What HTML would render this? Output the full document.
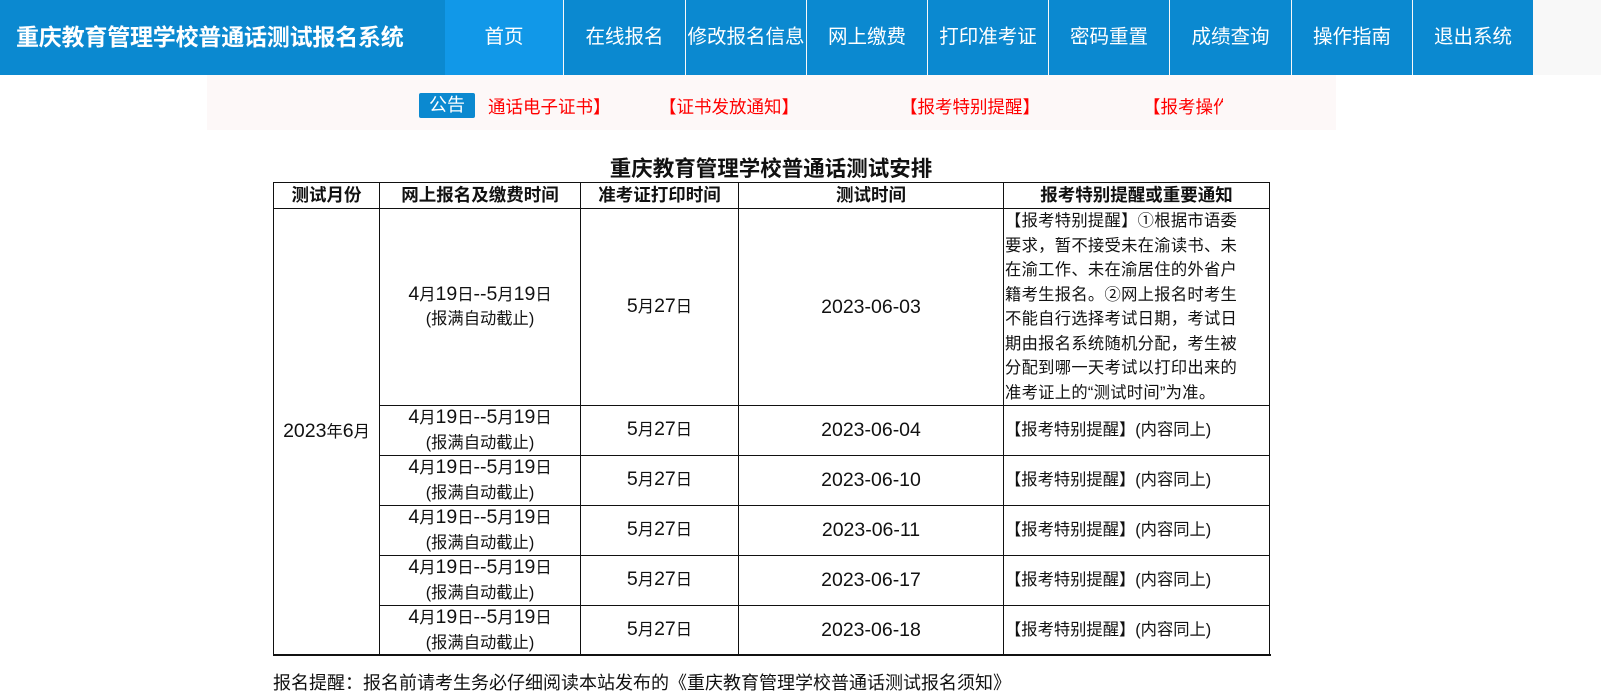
<!DOCTYPE html>
<html><head><meta charset="utf-8"><style>
*{margin:0;padding:0;box-sizing:border-box}
body{width:1601px;height:676px;overflow:hidden;background:#fff;font-family:"Liberation Sans","Noto Sans CJK SC",sans-serif;position:relative}
.hdr{position:absolute;left:0;top:0;width:1601px;height:75px;background:#f8f8f8}
.title{position:absolute;left:0;top:0;width:445px;height:75px;background:#0b89d0;color:#fff;font-weight:bold;font-size:23px;line-height:75px;padding-left:16px;letter-spacing:-0.2px;white-space:nowrap}
.nav{position:absolute;top:0;height:75px;background:#0b89d0;color:#fff;font-size:19.5px;line-height:75px;text-align:center;white-space:nowrap;overflow:hidden}
.notice{position:absolute;left:207px;top:75px;width:1129px;height:55px;background:#fdf8f8}
.badge{position:absolute;left:419px;top:93px;width:56px;height:25px;background:#0b89d0;color:#fff;border-radius:2px;font-size:18px;line-height:25px;text-align:center}
.red{position:absolute;top:95px;color:#f00;font-size:17.5px;line-height:24px;white-space:nowrap}
h2{position:absolute;left:273px;width:996px;top:155px;text-align:center;font-size:21.5px;line-height:28px;color:#111;white-space:nowrap}
table{position:absolute;left:273px;top:182px;border-collapse:collapse;font-size:16.3px;color:#111;table-layout:fixed}
td,th{border:1px solid #111;text-align:center;line-height:24.5px;padding:0;white-space:nowrap;overflow:hidden}
th{height:26px;font-size:17.5px}
td{height:50px}
.n{text-align:left;padding-left:1px}
.d{font-size:19.5px;line-height:0}
.foot{position:absolute;left:273px;top:654px;width:998px;border-top:2px solid #111;font-size:18px;color:#111;line-height:24px;padding-top:15px;white-space:nowrap;overflow:hidden;background:#fff}
</style></head><body>
<div class="hdr"></div>
<div class="title">重庆教育管理学校普通话测试报名系统</div>
<div class="nav" style="left:445px;width:118px;background:#1198e8">首页</div>
<div class="nav" style="left:564px;width:121px">在线报名</div>
<div class="nav" style="left:686px;width:120px">修改报名信息</div>
<div class="nav" style="left:807px;width:120px">网上缴费</div>
<div class="nav" style="left:928px;width:120px">打印准考证</div>
<div class="nav" style="left:1049px;width:120px">密码重置</div>
<div class="nav" style="left:1170px;width:121px">成绩查询</div>
<div class="nav" style="left:1292px;width:120px">操作指南</div>
<div class="nav" style="left:1413px;width:120px">退出系统</div>
<div class="notice"></div>
<div class="badge">公告</div>
<div class="red" style="left:488px">通话电子证书】</div>
<div class="red" style="left:659px">【证书发放通知】</div>
<div class="red" style="left:900px">【报考特别提醒】</div>
<div class="red" style="left:1143px;width:80px;overflow:hidden">【报考操作</div>
<h2>重庆教育管理学校普通话测试安排</h2>
<table>
<colgroup><col style="width:106px"><col style="width:201px"><col style="width:158px"><col style="width:265px"><col style="width:266px"></colgroup>
<tr><th>测试月份</th><th>网上报名及缴费时间</th><th>准考证打印时间</th><th>测试时间</th><th>报考特别提醒或重要通知</th></tr>
<tr><td rowspan="6"><span class="d">2023</span>年<span class="d">6</span>月</td><td style="height:197px"><span class="d">4</span>月<span class="d">19</span>日<span class="d">--5</span>月<span class="d">19</span>日<br>(报满自动截止)</td><td><span class="d">5</span>月<span class="d">27</span>日</td><td class="d" style="line-height:24.5px">2023-06-03</td><td class="n" style="letter-spacing:0.3px">【报考特别提醒】①根据市语委<br>要求，暂不接受未在渝读书、未<br>在渝工作、未在渝居住的外省户<br>籍考生报名。②网上报名时考生<br>不能自行选择考试日期，考试日<br>期由报名系统随机分配，考生被<br>分配到哪一天考试以打印出来的<br>准考证上的“测试时间”为准。</td></tr>
<tr><td><span class="d">4</span>月<span class="d">19</span>日<span class="d">--5</span>月<span class="d">19</span>日<br>(报满自动截止)</td><td><span class="d">5</span>月<span class="d">27</span>日</td><td class="d" style="line-height:24.5px">2023-06-04</td><td class="n">【报考特别提醒】(内容同上)</td></tr>
<tr><td><span class="d">4</span>月<span class="d">19</span>日<span class="d">--5</span>月<span class="d">19</span>日<br>(报满自动截止)</td><td><span class="d">5</span>月<span class="d">27</span>日</td><td class="d" style="line-height:24.5px">2023-06-10</td><td class="n">【报考特别提醒】(内容同上)</td></tr>
<tr><td><span class="d">4</span>月<span class="d">19</span>日<span class="d">--5</span>月<span class="d">19</span>日<br>(报满自动截止)</td><td><span class="d">5</span>月<span class="d">27</span>日</td><td class="d" style="line-height:24.5px">2023-06-11</td><td class="n">【报考特别提醒】(内容同上)</td></tr>
<tr><td><span class="d">4</span>月<span class="d">19</span>日<span class="d">--5</span>月<span class="d">19</span>日<br>(报满自动截止)</td><td><span class="d">5</span>月<span class="d">27</span>日</td><td class="d" style="line-height:24.5px">2023-06-17</td><td class="n">【报考特别提醒】(内容同上)</td></tr>
<tr><td><span class="d">4</span>月<span class="d">19</span>日<span class="d">--5</span>月<span class="d">19</span>日<br>(报满自动截止)</td><td><span class="d">5</span>月<span class="d">27</span>日</td><td class="d" style="line-height:24.5px">2023-06-18</td><td class="n">【报考特别提醒】(内容同上)</td></tr>
</table>
<div class="foot">报名提醒：报名前请考生务必仔细阅读本站发布的《重庆教育管理学校普通话测试报名须知》</div>
</body></html>
